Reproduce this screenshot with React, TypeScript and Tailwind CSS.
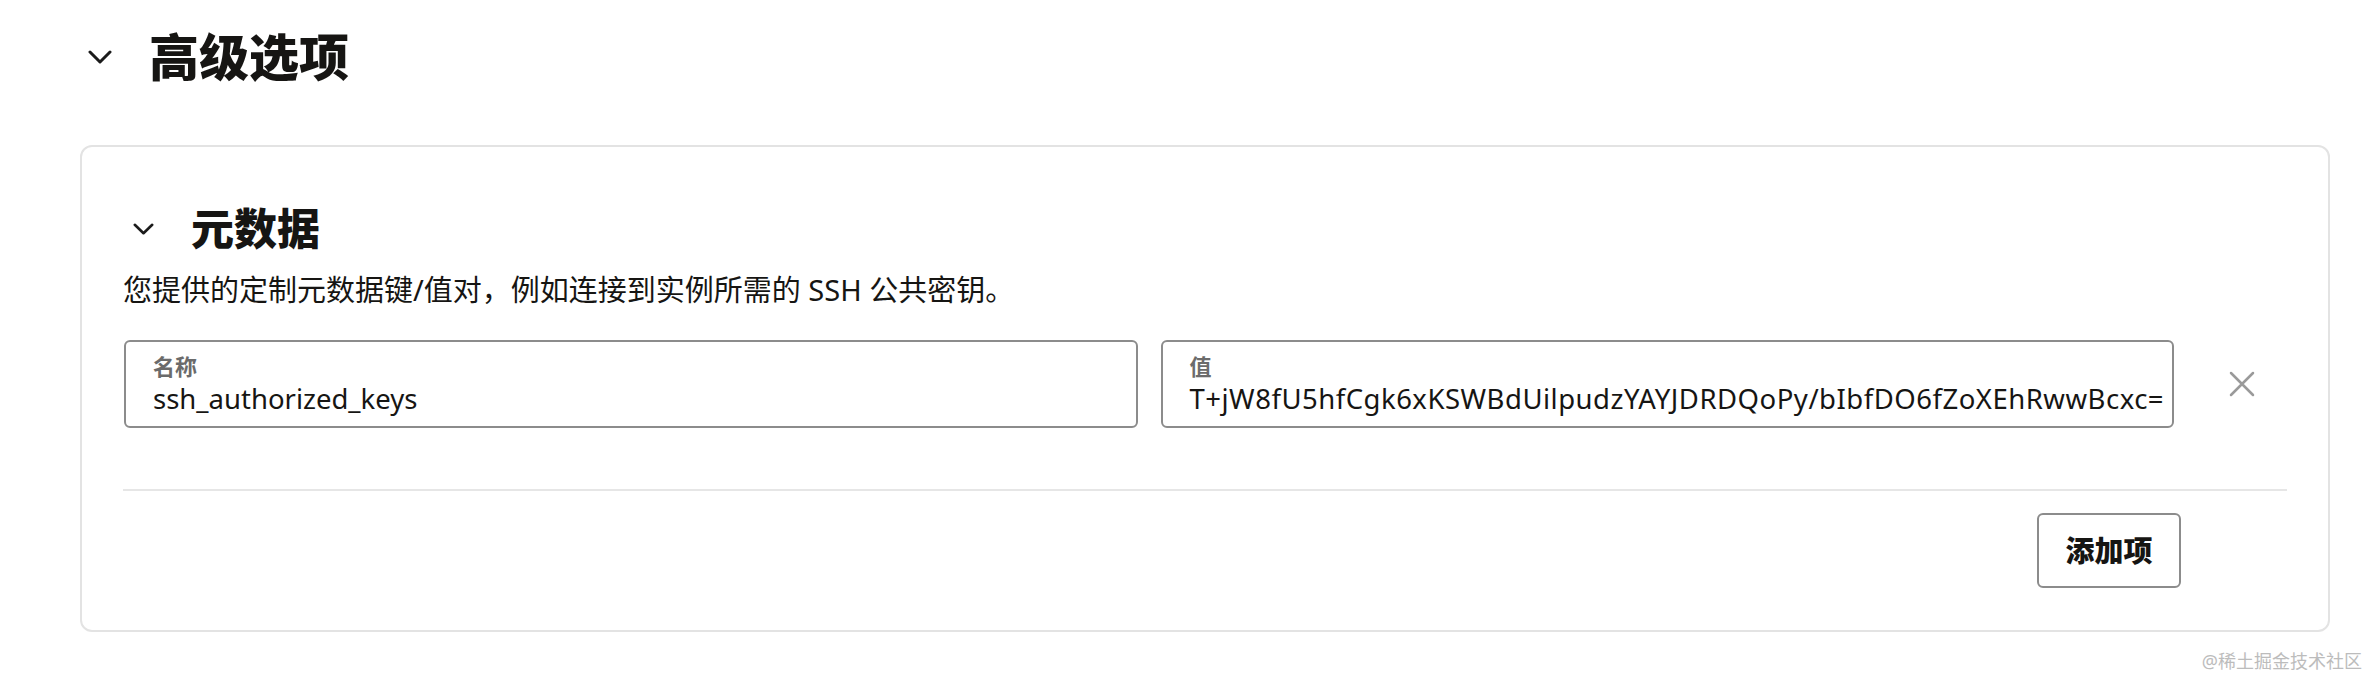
import React from 'react';

const font = { fontFamily: '"Noto Sans", "Noto Sans CJK SC", sans-serif' };

const Chevron: React.FC<{ w: number; h: number; stroke: number }> = ({ w, h, stroke }) => (
  <svg width={w} height={h} viewBox={`0 0 ${w} ${h}`} fill="none" className="shrink-0">
    <path
      d={`M${stroke / 2 + 0.5} ${stroke / 2 + 0.5} L${w / 2} ${h - stroke / 2 - 0.5} L${w - stroke / 2 - 0.5} ${stroke / 2 + 0.5}`}
      stroke="#1b1b1b"
      strokeWidth={stroke}
      strokeLinecap="round"
      strokeLinejoin="round"
    />
  </svg>
);

const Field: React.FC<{ label: string; value: string; wide?: boolean }> = ({ label, value, wide }) => (
  <div className="flex-1 min-w-0 h-[88px] border-2 border-[#8c8c8c] rounded-[6px] pl-[27px] pr-[10px] pt-[11px] flex flex-col">
    <span className="text-[22px] leading-[26px] font-bold text-[#6b6b6b]">{label}</span>
    <span
      className={
        wide
          ? 'mt-[2px] text-[27.5px] leading-[36px] tracking-[0.5px] text-[#161513] whitespace-nowrap'
          : 'mt-[2px] text-[27.5px] leading-[36px] text-[#161513] whitespace-nowrap'
      }
    >
      {value}
    </span>
  </div>
);

export default function App() {
  return (
    <div className="relative w-[2368px] h-[678px] overflow-hidden bg-white pl-[80px] pr-[38px] pt-[25px]" style={font}>
      {/* Section header */}
      <div className="flex items-center h-[64px] pl-[8px]">
        <Chevron w={24} h={14} stroke={3} />
        <h1 className="ml-[37px] text-[50px] leading-[64px] font-black text-[#161513]">高级选项</h1>
      </div>

      {/* Metadata card */}
      <section className="mt-[56px] border-2 border-[#e3e3e3] rounded-[12px] px-[41px] pt-[54px] pb-[42px]">
        <div className="flex items-center h-[56px]">
          <div className="ml-[10px]">
            <Chevron w={21} h={12} stroke={2.6} />
          </div>
          <h2 className="ml-[37px] text-[43px] leading-[56px] font-black text-[#161513]">元数据</h2>
        </div>

        <p className="mt-[13px] text-[29px] leading-[40px] text-[#161513]">
          您提供的定制元数据键/值对，例如连接到实例所需的 SSH 公共密钥。
        </p>

        <div className="mt-[30px] flex items-center pl-px">
          <Field label="名称" value="ssh_authorized_keys" />
          <div className="w-[23px] shrink-0" />
          <Field label="值" value="T+jW8fU5hfCgk6xKSWBdUilpudzYAYJDRDQoPy/bIbfDO6fZoXEhRwwBcxc=" wide />
          <button className="ml-[44px] mr-[21px] w-[48px] h-[48px] shrink-0 flex items-center justify-center">
            <svg width="26" height="26" viewBox="0 0 26 26" fill="none">
              <path d="M2 2 L24 24 M24 2 L2 24" stroke="#9a9a9a" strokeWidth="2.5" strokeLinecap="round" />
            </svg>
          </button>
        </div>

        <div className="mt-[61px] h-[2px] bg-[#e6e6e6]" />

        <div className="mt-[22px] flex justify-end pr-[106px]">
          <button className="w-[144px] h-[75px] border-2 border-[#8c8c8c] rounded-[6px] text-[29px] font-black text-[#161513]">
            添加项
          </button>
        </div>
      </section>

      {/* Watermark */}
      <span className="absolute right-[6px] bottom-[6px] text-[18px] leading-[22px] text-[#bcbcbc]">@稀土掘金技术社区</span>
    </div>
  );
}
